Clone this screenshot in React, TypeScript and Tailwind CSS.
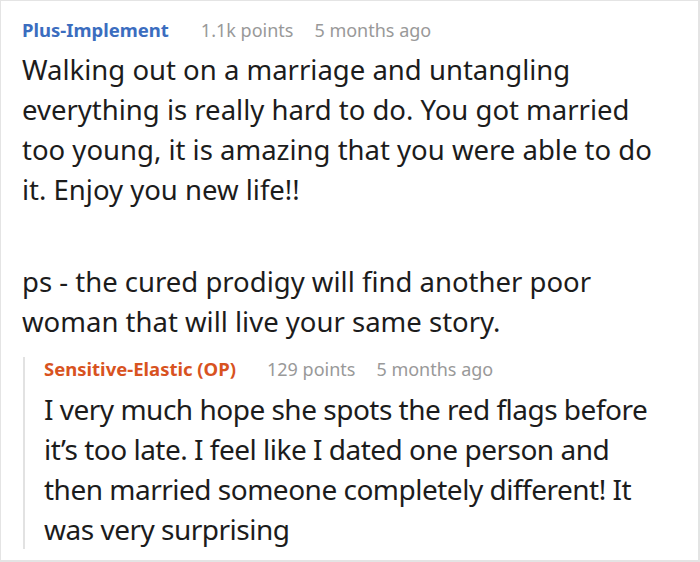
const meta = "text-[18px] leading-[24px] text-[#999999]";

const parentParas = [
  [
    "Walking out on a marriage and untangling",
    "everything is really hard to do. You got married",
    "too young, it is amazing that you were able to do",
    "it. Enjoy you new life!!",
  ],
  ["ps - the cured prodigy will find another poor", "woman that will live your same story."],
];

const replyLines = [
  "I very much hope she spots the red flags before",
  "it’s too late. I feel like I dated one person and",
  "then married someone completely different! It",
  "was very surprising",
];

export default function App() {
  return (
    <main
      className="w-[700px] h-[562px] overflow-hidden bg-white border-t border-l border-r-2 border-b-2 border-[#e4e4e4] pl-[21px] pt-[17px]"
      style={{ fontFamily: '"Noto Sans", "Open Sans", sans-serif' }}
    >
      {/* parent comment */}
      <div className="flex items-center">
        <span className="text-[18.5px] leading-[24px] font-bold text-[#3b6dbf]">Plus-Implement</span>
        <span className={`${meta} ml-[32px]`}>1.1k points</span>
        <span className={`${meta} ml-[21px]`}>5 months ago</span>
      </div>
      <div className="mt-2 text-[27.5px] leading-[40px] text-[#1c1c1c] flex flex-col gap-[52px]">
        {parentParas.map((lines, i) => (
          <p key={i}>
            {lines.map((l) => (
              <span key={l} className="block whitespace-nowrap">{l}</span>
            ))}
          </p>
        ))}
      </div>

      {/* reply */}
      <div className="mt-[27px] ml-[1px] border-l-2 border-[#e2e2e2] pl-[19px]">
        <div className="-mt-3 flex items-center">
          <span className="text-[18.5px] leading-[24px] font-bold text-[#d8531f]">Sensitive-Elastic (OP)</span>
          <span className={`${meta} ml-[31px]`}>129 points</span>
          <span className={`${meta} ml-[21px]`}>5 months ago</span>
        </div>
        <p className="mt-2 text-[28px] leading-[40px] text-[#1c1c1c] tracking-[-0.5px]">
          {replyLines.map((l) => (
            <span key={l} className="block whitespace-nowrap">{l}</span>
          ))}
        </p>
      </div>
    </main>
  );
}
